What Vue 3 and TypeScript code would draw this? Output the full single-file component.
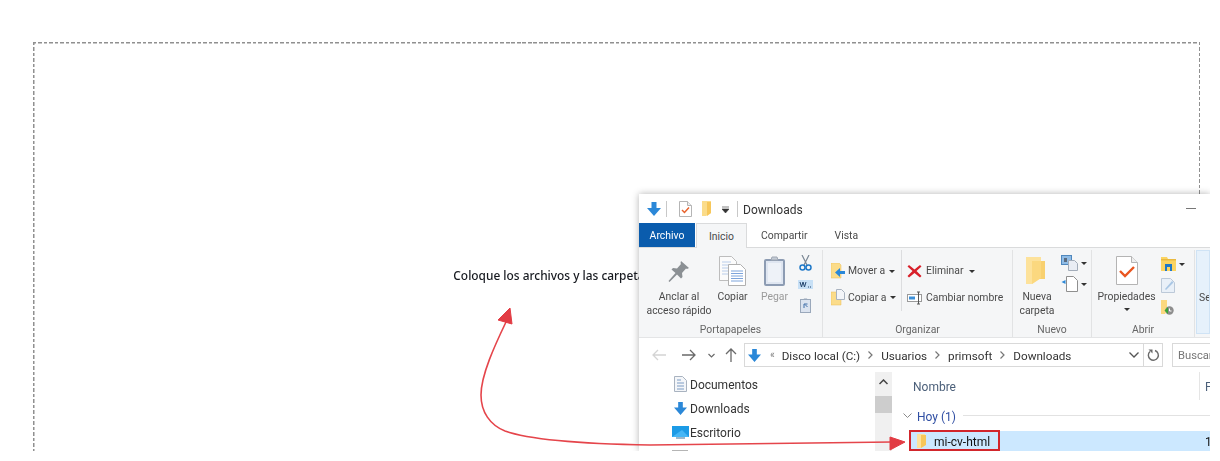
<script setup lang="ts">
const crumbs: string[] = ['Disco local (C:)', 'Usuarios', 'primsoft', 'Downloads']
</script>

<template>
  <div class="stage">
    <section class="dropzone">
      <p class="drop-text">Coloque los archivos y las carpetas que desea cargar aquí</p>
    </section>

    <div class="explorer">
      <header class="titlebar">
        <svg class="t-down" width="14" height="14" viewBox="0 0 14 14"><path d="M4.500 0h5v6H14l-7 8-7-8h4.500z" fill="#2b88d8"/></svg>
        <i class="t-sep first"></i>
        <svg class="t-note" width="13" height="16" viewBox="0 0 13 16"><path d="M.5.5h8l4 4v11H.5z" fill="#fff" stroke="#b5b5b5"/><path d="M8.500.5v4h4" fill="#eee" stroke="#b5b5b5"/><path d="M3 9l2.500 2.500L10 6.500" fill="none" stroke="#e8622c" stroke-width="1.500"/></svg>
        <svg class="t-folder" width="10" height="15" viewBox="0 0 10 15"><path d="M0 0h9v12l-5 3H0z" fill="#fbdc8a"/><path d="M5 1h4v11l-4 3z" fill="#f7c75a"/></svg>
        <svg class="t-drop" width="7" height="7" viewBox="0 0 7 7"><path d="M0 1h7M0 3h7L3.500 7z" fill="#333" stroke="#333" stroke-width=".6"/></svg>
        <i class="t-sep second"></i>
        <span class="t-title">Downloads</span>
        <i class="t-min"></i>
      </header>

      <nav class="tabs">
        <span class="tab file">Archivo</span>
        <span class="tab active">Inicio</span>
        <span class="tab share">Compartir</span>
        <span class="tab view">Vista</span>
      </nav>

      <div class="ribbon">
        <div class="group clip">
          <div class="group-body">
            <button class="big pin">
              <span class="big-icon"><svg width="22" height="22" viewBox="0 0 22 22"><path d="M13 1l8 7-2 1-1-.5-4 4.500.5 4-1.500 1.500-4-4-7.500 7.500L.5 21l7-8-4-3.500L5 8l4 .5 4-4.500-.5-1z" fill="#8b9094"/></svg></span>
              <span class="big-label">Anclar al<br>acceso rápido</span>
            </button>
            <button class="big copy">
              <span class="big-icon"><svg width="27" height="30" viewBox="0 0 27 30"><path d="M.5.5h12l5 5v19H.5z" fill="#fbfbfb" stroke="#bdbdbd"/><path d="M3 6h9M3 9h12M3 12h12M3 15h12M3 18h12" stroke="#b9cdea"/><path d="M9.500 8.500h12l5 5v16h-17z" fill="#fff" stroke="#b0b0b0"/><path d="M12 15h12M12 17.500h12M12 20h12M12 22.500h12M12 25h12" stroke="#7da4db"/></svg></span>
              <span class="big-label">Copiar</span>
            </button>
            <button class="big paste">
              <span class="big-icon"><svg width="21" height="30" viewBox="0 0 21 30"><rect x="1" y="4" width="19" height="25" rx="1" fill="#dfe6f1" stroke="#8d9cb3" stroke-width="2"/><rect x="4" y="7" width="13" height="19" fill="#eef2f8"/><path d="M7 4l1-3h5l1 3z" fill="#c3cad4" stroke="#a0a8b3"/></svg></span>
              <span class="big-label muted">Pegar</span>
            </button>
            <div class="small-col clip-tools">
              <svg width="13" height="16" viewBox="0 0 13 16"><path d="M3 0l5 10M10 0L5 10" stroke="#7b8794" stroke-width="1.200" fill="none"/><circle cx="3.500" cy="12.500" r="2.500" fill="none" stroke="#1f78c8" stroke-width="1.500"/><circle cx="9.500" cy="12.500" r="2.500" fill="none" stroke="#1f78c8" stroke-width="1.500"/></svg>
              <svg width="15" height="9" viewBox="0 0 15 9"><rect width="15" height="9" fill="#c7e0f6"/><path d="M2 2l1.500 5L5 2l1.500 5L8 2" fill="none" stroke="#24466f"/><path d="M10 7h1M12 7h1" stroke="#24466f"/></svg>
              <svg width="11" height="15" viewBox="0 0 11 15"><rect x=".5" y="1.500" width="10" height="13" fill="#dbe3ef" stroke="#9aa8bb"/><path d="M3.500 1.500l.5-1h3l.5 1z" fill="#9aa8bb"/><path d="M4 10V6h3.500M5 6.500L7.500 9" stroke="#3f6ea8" fill="none"/></svg>
            </div>
          </div>
          <div class="group-label">Portapapeles</div>
        </div>

        <div class="group org">
          <div class="group-body">
            <div class="org-col first">
              <div class="org-row">
                <svg width="14" height="16" viewBox="0 0 14 16"><path d="M0 0h8l2 2v13H0z" fill="#fbdc8a" stroke="#e8bd55" stroke-width=".5"/><path d="M14 8H9V5l-5 4.500L9 14v-3h5z" fill="#2b88d8"/></svg>
                <span>Mover a</span><i class="caret"></i>
              </div>
              <div class="org-row">
                <svg width="14" height="17" viewBox="0 0 14 17"><path d="M0 3h10v13H0z" fill="#fbdc8a" stroke="#e8bd55" stroke-width=".5"/><path d="M5.500.5h5l3 3v7h-8z" fill="#f3f5f9" stroke="#a9b3c0"/></svg>
                <span>Copiar a</span><i class="caret"></i>
              </div>
            </div>
            <div class="org-col second">
              <div class="org-row">
                <svg width="15" height="14" viewBox="0 0 15 14"><path d="M2 1l5.500 4.500L13 1l1.500 1.500L9.500 7l5 5-1.500 1.500L7.500 9 2 13.500.5 12l5-5-5-4.500z" fill="#d8202a"/></svg>
                <span>Eliminar</span><i class="caret"></i>
              </div>
              <div class="org-row">
                <svg width="15" height="14" viewBox="0 0 15 14"><rect x=".5" y="3.500" width="14" height="7" fill="#fff" stroke="#9a9a9a"/><rect x="2" y="5.500" width="6" height="3" fill="#3c8fd8"/><path d="M10 1h3M11.500 1v12M10 13h3" stroke="#555" fill="none"/></svg>
                <span>Cambiar nombre</span>
              </div>
            </div>
          </div>
          <div class="group-label">Organizar</div>
        </div>

        <div class="group fresh">
          <div class="group-body">
            <button class="big newfolder">
              <span class="big-icon"><svg width="19" height="27" viewBox="0 0 19 27"><path d="M0 0h15v21L6 27H0z" fill="#fde29b"/><path d="M6 4h13v18H6z" fill="#f8d06f"/><path d="M6 4h9v17l-9 6z" fill="#fbd87f"/></svg></span>
              <span class="big-label">Nueva<br>carpeta</span>
            </button>
            <div class="small-col new-tools">
              <div class="mini">
                <svg width="17" height="16" viewBox="0 0 17 16"><rect x=".5" y=".5" width="10" height="9" fill="#8fbce6" stroke="#4f87bd"/><rect x="3" y="3" width="3" height="4" fill="#5a6b80"/><path d="M7.500 5.500h6l3 3v7h-9z" fill="#e9edf4" stroke="#a2acb9"/></svg><i class="caret"></i>
              </div>
              <div class="mini">
                <svg width="17" height="16" viewBox="0 0 17 16"><path d="M5.500.5h7l4 4v11h-11z" fill="#fff" stroke="#8f8f8f"/><path d="M.5 6l4-2v4z" fill="#2b88d8"/></svg><i class="caret"></i>
              </div>
            </div>
          </div>
          <div class="group-label">Nuevo</div>
        </div>

        <div class="group open">
          <div class="group-body">
            <button class="big props">
              <span class="big-icon"><svg width="22" height="29" viewBox="0 0 22 29"><path d="M.5.500h15l6 6v22H.5z" fill="#fff" stroke="#b4b4b4"/><path d="M15.500.5v6h6" fill="#eee" stroke="#b4b4b4"/><path d="M4 15l5 5 9-9" fill="none" stroke="#e9551f" stroke-width="2.400"/></svg></span>
              <span class="big-label">Propiedades<i class="caret under"></i></span>
            </button>
            <div class="small-col open-tools">
              <div class="mini">
                <svg width="15" height="14" viewBox="0 0 15 14"><path d="M0 0h6l1 2h8v12H0z" fill="#fbd462"/><path d="M4 7h7v7H9v-4H6v4H4z" fill="#1f78c8"/><rect y="2" width="15" height="1.500" fill="#e9b93f"/></svg><i class="caret"></i>
              </div>
              <svg width="14" height="15" viewBox="0 0 14 15"><path d="M.5.500h9l4 4v10H.5z" fill="#e9f0f8" stroke="#bcc9d8"/><path d="M4 11l7-8 1.500 1.500L5 12z" fill="#a9c6e4"/></svg>
              <svg width="13" height="15" viewBox="0 0 13 15"><path d="M0 0h6v11l-2 3H0z" fill="#fbd87f"/><circle cx="8.500" cy="10.500" r="4.200" fill="#8d8d8d"/><path d="M3.500 10.500L7 7v7z" fill="#3aa537"/><path d="M8.500 8.500v2.500h2" stroke="#fff" fill="none"/></svg>
            </div>
          </div>
          <div class="group-label">Abrir</div>
        </div>

        <div class="select-all">
          <i class="select-icon"></i>
          <span>Se</span>
        </div>
      </div>

      <div class="addressbar">
        <svg class="nav-arrow" width="14" height="12" viewBox="0 0 14 12"><path d="M14 6H1M6 1L1 6l5 5" fill="none" stroke="#d4d4d4" stroke-width="1.300"/></svg>
        <svg class="nav-arrow fwd" width="14" height="12" viewBox="0 0 14 12"><path d="M0 6h13M8 1l5 5-5 5" fill="none" stroke="#6a6a6a" stroke-width="1.300"/></svg>
        <svg class="nav-chev" width="7" height="5" viewBox="0 0 7 5"><path d="M.5 1l3 3 3-3" fill="none" stroke="#6a6a6a" stroke-width="1.200"/></svg>
        <svg class="nav-up" width="12" height="14" viewBox="0 0 12 14"><path d="M6 14V1M1 6l5-5 5 5" fill="none" stroke="#6a6a6a" stroke-width="1.300"/></svg>
        <div class="address">
          <svg class="addr-down" width="13" height="13" viewBox="0 0 14 14"><path d="M4.500 0h5v6H14l-7 8-7-8h4.500z" fill="#2b88d8"/></svg>
          <span class="addr-more">«</span>
          <template v-for="(crumb, index) in crumbs" :key="crumb">
            <svg v-if="index > 0" class="crumb-sep" width="5" height="8" viewBox="0 0 5 8"><path d="M.5.5L4 4 .5 7.500" fill="none" stroke="#777" stroke-width="1.200"/></svg>
            <span class="crumb">{{ crumb }}</span>
          </template>
          <svg class="addr-chev" width="10" height="6" viewBox="0 0 10 6"><path d="M.5.5L5 5 9.500.5" fill="none" stroke="#555" stroke-width="1.300"/></svg>
          <i class="addr-sep"></i>
          <svg class="addr-refresh" width="13" height="13" viewBox="0 0 13 13"><path d="M3 2.500A5 5 0 1 0 8 1.500" fill="none" stroke="#6a6a6a" stroke-width="1.400"/><path d="M1.500 0.500h4v4z" fill="#6a6a6a"/></svg>
        </div>
        <div class="search">Buscar</div>
      </div>

      <div class="content">
        <aside class="navpane">
          <div class="nav-item">
            <span class="nav-icon"><svg width="13" height="16" viewBox="0 0 13 16"><path d="M.5.500h8l4 4v11H.5z" fill="#f4f6f9" stroke="#a9b3c0"/><path d="M3 4h4M3 7h7M3 10h7M3 13h7" stroke="#7d9cc4"/></svg></span>
            <span class="nav-text">Documentos</span>
          </div>
          <div class="nav-item">
            <span class="nav-icon"><svg width="13" height="13" viewBox="0 0 14 14"><path d="M4.500 0h5v6H14l-7 8-7-8h4.500z" fill="#2b88d8"/></svg></span>
            <span class="nav-text">Downloads</span>
          </div>
          <div class="nav-item">
            <span class="nav-icon"><svg width="17" height="13" viewBox="0 0 17 13"><rect width="17" height="11" fill="#1c9be6"/><path d="M0 11L10 4l7 7z" fill="#45b6f5"/><rect x="4" y="11" width="9" height="2" fill="#9bb8cc"/></svg></span>
            <span class="nav-text">Escritorio</span>
          </div>
          <div class="nav-item">
            <span class="nav-icon"><svg width="16" height="13" viewBox="0 0 16 13"><rect x=".5" y=".5" width="15" height="12" fill="#e8e8e8" stroke="#b5b5b5"/></svg></span>
          </div>
        </aside>
        <div class="scrollbar">
          <svg width="9" height="6" viewBox="0 0 9 6"><path d="M.5 5L4.500 1l4 4" fill="none" stroke="#444" stroke-width="1.500"/></svg>
          <i class="thumb"></i>
        </div>
        <main class="files">
          <div class="file-head">
            <span class="head-name">Nombre</span>
            <i class="head-sep"></i>
            <span class="head-next">F</span>
          </div>
          <div class="file-group">
            <svg width="9" height="5" viewBox="0 0 9 5"><path d="M.5.500l4 4 4-4" fill="none" stroke="#8a8a8a"/></svg>
            <span class="group-title">Hoy (1)</span>
            <i class="group-line"></i>
          </div>
          <div class="file-row">
            <svg width="9" height="14" viewBox="0 0 9 14"><path d="M0 0h8v11l-4 3H0z" fill="#fde29b"/><path d="M4 1h5v10l-5 3z" fill="#f7c75a"/></svg>
            <span class="file-name">mi-cv-html</span>
            <span class="file-date">1</span>
            <i class="marker"></i>
          </div>
        </main>
      </div>
    </div>

    <svg class="arrows" width="1210" height="451" viewBox="0 0 1210 451">
      <path d="M892 442L650 445C590 444 530 440 505 431C490 425 481 412 481 395C481 375 495 345 506 322" fill="none" stroke="#e5454b" stroke-width="1.600"/>
      <path d="M510 308L498 320L512 324z" fill="#e23c44" stroke="#e23c44" stroke-linejoin="round"/>
      <path d="M905 442L890 437V450z" fill="#e23c44" stroke="#e23c44" stroke-linejoin="round"/>
    </svg>
  </div>
</template>

<style>
html, body { background: #fff; margin: 0; }
</style>

<style scoped>
.stage {
  position: relative;
  width: 1210px;
  height: 451px;
  overflow: hidden;
  background: #fff;
  padding: 42px 0 0 33px;
  box-sizing: border-box;
}
.dropzone {
  width: 1167px;
  height: 520px;
  box-sizing: border-box;
  padding-top: 223px;
  text-align: center;
  filter: blur(.3px);
  background:
    repeating-linear-gradient(90deg, #909090 0 3.500px, transparent 3.500px 5.500px) left top / 100% 1.500px no-repeat,
    repeating-linear-gradient(180deg, #909090 0 3.500px, transparent 3.500px 5.500px) left top / 1.500px 100% no-repeat,
    repeating-linear-gradient(180deg, #909090 0 3.500px, transparent 3.500px 5.500px) right top / 1.500px 100% no-repeat;
}
.drop-text {
  margin: 0;
  font: 500 11.900px/20px "Noto Sans", sans-serif;
  color: #16191f;
}
.explorer {
  position: absolute;
  left: 639px;
  top: 194px;
  width: 571px;
  height: 257px;
  background: #fff;
  box-shadow: 0 0 7px rgba(0, 0, 0, .3);
  font: 10.400px/14px Roboto, sans-serif;
  color: #4a4a4a;
  filter: blur(.3px);
  overflow: hidden;
}
i { display: block; font-style: normal; }
svg { flex: none; }
button {
  appearance: none;
  border: 0;
  background: none;
  padding: 0;
  font: inherit;
  color: inherit;
}
.titlebar {
  display: flex;
  align-items: center;
  height: 29px;
  padding-left: 8px;
  color: #333;
}
.t-sep { width: 1px; height: 16px; background: #c8c8c8; flex: none; }
.t-sep.first { margin-left: 5px; }
.t-note { margin-left: 12px; }
.t-folder { margin-left: 10px; }
.t-drop { margin-left: 10px; margin-top: 2px; }
.t-sep.second { margin-left: 8px; }
.t-title { margin-left: 5px; padding-top: 2px; font-size: 12px; width: 59px; white-space: nowrap; }
.t-min { width: 10px; height: 1px; background: #777; margin-left: 384px; }
.tabs {
  display: flex;
  height: 24px;
}
.tab { line-height: 26px; box-sizing: border-box; }
.tab.file {
  width: 56px;
  background: #0a5cad;
  color: #fff;
  text-align: center;
}
.tab.active {
  width: 51px;
  height: 25px;
  margin-left: 1px;
  background: #f5f6f7;
  border: 1px solid #dadbdc;
  border-bottom: 0;
  text-align: center;
  line-height: 25px;
  position: relative;
  z-index: 1;
}
.tab.share { margin-left: 14px; }
.tab.view { margin-left: 27px; }
.ribbon {
  display: flex;
  height: 91px;
  box-sizing: border-box;
  background: #f5f6f7;
  border-top: 1px solid #dadbdc;
  border-bottom: 1px solid #e4e5e6;
}
.group {
  display: flex;
  flex-direction: column;
  flex: none;
  box-sizing: border-box;
  height: 87px;
  margin-top: 2px;
  border-right: 1px solid #e2e3e4;
}
.group-body {
  display: flex;
  height: 73px;
}
.group-label {
  height: 14px;
  text-align: center;
  color: #666;
}
.group.clip { width: 184px; }
.group.org { width: 190px; }
.group.fresh { width: 79px; }
.group.open { width: 103px; }
.big {
  display: flex;
  flex-direction: column;
  align-items: center;
  flex: none;
}
.big-icon {
  display: flex;
  align-items: center;
  justify-content: center;
  height: 40px;
}
.big-icon svg { display: block; margin-top: 1px; }
.big-label { display: block; text-align: center; white-space: nowrap; }
.muted { color: #9a9a9a; }
.big.pin { width: 64px; margin-left: 8px; }
.big.copy { width: 31px; margin-left: 6px; }
.big.paste { width: 27px; margin-left: 13px; }
.small-col {
  display: flex;
  flex-direction: column;
  align-items: flex-start;
  flex: none;
}
.clip-tools { width: 17px; margin-left: 9px; padding-top: 5px; gap: 9px; align-items: center; }
.org-col { display: flex; flex-direction: column; padding-top: 8px; height: 61px; box-sizing: border-box; flex: none; }
.org-col.first { width: 71px; margin-left: 8px; border-right: 1px solid #dcdddf; }
.org-col.second { margin-left: 5px; }
.org-row {
  display: flex;
  align-items: center;
  height: 28.500px;
  gap: 4px;
  white-space: nowrap;
}
.org-col.first .org-row { gap: 3px; }
.caret {
  width: 0;
  height: 0;
  border: 3px solid transparent;
  border-top: 3px solid #333;
  border-bottom: 0;
}
.org-row .caret { margin-left: 1px; }
.caret.under { margin: 4px auto 0; }
.big.newfolder { width: 34px; margin-left: 7px; }
.newfolder .big-icon { margin-right: 3px; }
.new-tools { margin-left: 7px; padding-top: 5px; gap: 5px; }
.mini { display: flex; align-items: center; gap: 3px; }
.big.props { width: 57px; margin-left: 6px; }
.open-tools { margin-left: 6px; padding-top: 7px; gap: 7px; }
.select-all {
  flex: 1;
  margin: 2px 0 3px 1px;
  box-sizing: border-box;
  background: #e6f1fb;
  border: 1px solid #cfe3f5;
  padding-left: 2px;
  overflow: hidden;
  white-space: nowrap;
}
.select-icon { width: 4px; height: 32px; margin: 3px 0 5px 10px; background: #d5e6f6; }
.addressbar {
  display: flex;
  align-items: center;
  height: 34px;
  padding-left: 13px;
  color: #333;
  font-size: 11.700px;
}
.nav-arrow.fwd { margin-left: 16px; }
.nav-chev { margin-left: 12px; }
.nav-up { margin-left: 10px; }
.address {
  display: flex;
  align-items: center;
  width: 419px;
  height: 24px;
  box-sizing: border-box;
  margin-left: 7px;
  border: 1px solid #d9d9d9;
  padding-left: 3px;
  flex: none;
}
.addr-more { margin-left: 9px; color: #777; font-size: 10px; }
.crumb { white-space: nowrap; padding-top: 2px; }
.addr-more + .crumb { margin-left: 7px; }
.crumb-sep { margin: 0 8px 0 8px; }
.addr-chev { margin-left: auto; }
.addr-sep { width: 1px; height: 22px; background: #d9d9d9; margin-left: 4px; flex: none; }
.addr-refresh { margin: 0 2px 0 3px; }
.search {
  flex: 1;
  min-width: 0;
  height: 24px;
  box-sizing: border-box;
  margin-left: 9px;
  border: 1px solid #d9d9d9;
  border-right: 0;
  padding-left: 5px;
  font-size: 11.200px;
  line-height: 24px;
  color: #777;
  white-space: nowrap;
}
.content { display: flex; height: 80px; font-size: 12px; }
.navpane { width: 236px; flex: none; }
.nav-item {
  display: flex;
  align-items: center;
  height: 24px;
  padding-left: 32px;
  color: #333;
}
.nav-text { padding-top: 2px; }
.nav-icon {
  display: flex;
  justify-content: center;
  align-items: center;
  width: 18px;
  margin-right: 1px;
}
.scrollbar {
  display: flex;
  flex-direction: column;
  align-items: center;
  flex: none;
  width: 17px;
  background: #f0f0f0;
  padding-top: 7px;
  box-sizing: border-box;
}
.thumb { width: 17px; height: 17px; background: #cdcdcd; margin-top: 11px; flex: none; }
.files { flex: 1; min-width: 0; }
.file-head {
  display: flex;
  align-items: center;
  height: 28px;
  padding-left: 21px;
  color: #4c607a;
}
.head-name { width: 286px; flex: none; padding-top: 2px; }
.head-sep { width: 1px; height: 28px; background: #e5e5e5; flex: none; }
.head-next { margin-left: 5px; padding-top: 2px; white-space: nowrap; }
.file-group {
  display: flex;
  align-items: center;
  height: 31px;
  padding-left: 11px;
  color: #2f4ea3;
}
.group-title { margin-left: 5px; padding-top: 2px; white-space: nowrap; }
.group-line { flex: 1; height: 1px; background: #e2e2e2; margin-left: 7px; }
.file-row {
  position: relative;
  display: flex;
  align-items: center;
  height: 20px;
  margin-left: 18px;
  padding-left: 7px;
  background: #cce8ff;
  color: #111;
}
.file-name { margin-left: 8px; width: 271px; flex: none; padding-top: 2px; }
.file-date { white-space: nowrap; padding-top: 2px; }
.marker {
  position: absolute;
  left: -1px;
  top: -1px;
  width: 91px;
  height: 21px;
  box-sizing: border-box;
  border: 2px solid #d2262c;
}
.arrows {
  position: absolute;
  left: 0;
  top: 0;
  pointer-events: none;
}
</style>
